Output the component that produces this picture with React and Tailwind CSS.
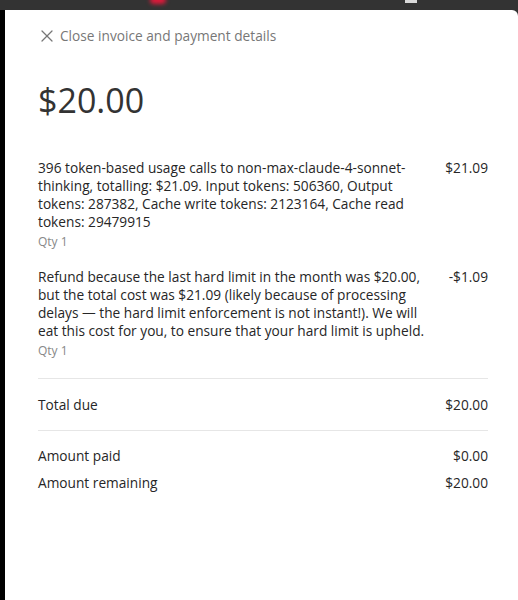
import { X } from "lucide-react";

const items = [
  {
    text: "396 token-based usage calls to non-max-claude-4-sonnet-thinking, totalling: $21.09. Input tokens: 506360, Output tokens: 287382, Cache write tokens: 2123164, Cache read tokens: 29479915",
    amount: "$21.09",
  },
  {
    text: "Refund because the last hard limit in the month was $20.00, but the total cost was $21.09 (likely because of processing delays — the hard limit enforcement is not instant!). We will eat this cost for you, to ensure that your hard limit is upheld.",
    amount: "-$1.09",
  },
];

export default function App() {
  return (
    <div
      className="h-screen flex flex-col bg-[#333333] overflow-hidden"
      style={{ fontFamily: '"Open Sans", "Noto Sans", sans-serif' }}
    >
      {/* window chrome strip */}
      <div className="h-[10px] shrink-0 relative">
        <div className="absolute left-[150px] top-[-4px] w-[16px] h-[8px] rounded-full bg-[#e0193a] blur-[2px]" />
        <div className="absolute left-[405px] top-[-2px] w-[12px] h-[5px] bg-[#d9d9d9]" />
      </div>

      <div className="flex flex-1 min-w-0">
        <div className="w-[5px] bg-black shrink-0" />

        {/* Invoice panel */}
        <div className="flex-1 min-w-0 bg-white rounded-tr-[6px] pl-[33px] pr-[30px] text-[#262626] text-[13.7px]">
          <button className="flex items-center gap-[3px] mt-[16px] -ml-[1px] text-[13.7px] text-[#777777]">
            <X size={20} strokeWidth={1.5} />
            <span>Close invoice and payment details</span>
          </button>

          <div className="mt-[33px] text-[34px] leading-[40px] text-[#333333]">$20.00</div>

          <div className="mt-[39px] flex flex-col gap-[18px]">
            {items.map((item, i) => (
              <div key={i} className="flex justify-between gap-[12px]">
                <div className="w-[392px] shrink-0">
                  <p className="leading-[18px]">{item.text}</p>
                  <p className="mt-[3px] text-[12px] leading-[16px] text-[#888888]">Qty 1</p>
                </div>
                <div className="leading-[18px] whitespace-nowrap">{item.amount}</div>
              </div>
            ))}
          </div>

          <div className="mt-[19px] border-t border-[#e6e6e6]" />
          <div className="flex justify-between items-center h-[51px] pt-[2px]">
            <span>Total due</span>
            <span>$20.00</span>
          </div>
          <div className="border-t border-[#e6e6e6]" />

          <div className="mt-[16px] flex flex-col gap-[9px] leading-[18px]">
            <div className="flex justify-between">
              <span>Amount paid</span>
              <span>$0.00</span>
            </div>
            <div className="flex justify-between">
              <span>Amount remaining</span>
              <span>$20.00</span>
            </div>
          </div>
        </div>
      </div>
    </div>
  );
}
